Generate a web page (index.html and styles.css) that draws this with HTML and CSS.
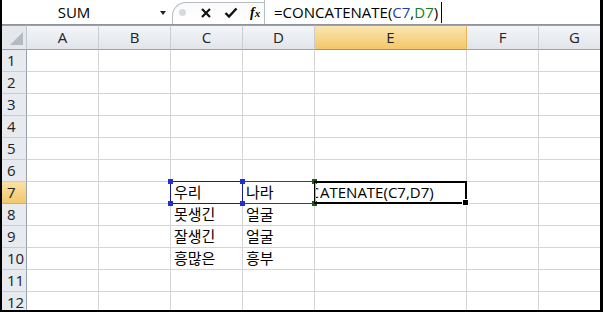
FILE: index.html
```html
<!DOCTYPE html>
<html>
<head>
<meta charset="utf-8">
<link rel="stylesheet" href="styles.css">
</head>
<body>
<div class="frame">
  <div class="fbar">
    <div class="namebox"><span class="nametext">SUM</span><span class="arrow"></span></div>
    <div class="btns">
      <span class="grip"></span>
      <svg class="ico" width="12" height="12" viewBox="0 0 12 12"><path d="M2 2 L10 10 M10 2 L2 10" stroke="#111" stroke-width="2.2" fill="none"/></svg>
      <svg class="ico" width="14" height="12" viewBox="0 0 14 12"><path d="M1.5 6 L5 9.5 L12.5 1.5" stroke="#111" stroke-width="2.4" fill="none"/></svg>
      <span class="fx">f<span class="x">x</span></span>
    </div>
    <div class="formula">=CONCATENATE(<span class="ref-c">C7</span>,<span class="ref-d">D7</span>)<span class="caret"></span></div>
  </div>
  <div class="grid">
    <div class="corner"><span class="tri"></span></div>
    <div class="ch">A</div><div class="ch">B</div><div class="ch">C</div><div class="ch">D</div><div class="ch active">E</div><div class="ch">F</div><div class="ch">G</div>

    <div class="rh">1</div><div class="c"></div><div class="c"></div><div class="c"></div><div class="c"></div><div class="c"></div><div class="c"></div><div class="c"></div>
    <div class="rh">2</div><div class="c"></div><div class="c"></div><div class="c"></div><div class="c"></div><div class="c"></div><div class="c"></div><div class="c"></div>
    <div class="rh">3</div><div class="c"></div><div class="c"></div><div class="c"></div><div class="c"></div><div class="c"></div><div class="c"></div><div class="c"></div>
    <div class="rh">4</div><div class="c"></div><div class="c"></div><div class="c"></div><div class="c"></div><div class="c"></div><div class="c"></div><div class="c"></div>
    <div class="rh">5</div><div class="c"></div><div class="c"></div><div class="c"></div><div class="c"></div><div class="c"></div><div class="c"></div><div class="c"></div>
    <div class="rh">6</div><div class="c"></div><div class="c"></div><div class="c"></div><div class="c"></div><div class="c"></div><div class="c"></div><div class="c"></div>
    <div class="rh active">7</div><div class="c"></div><div class="c"></div>
      <div class="c">우리<span class="selc"><i class="h tl"></i><i class="h tr"></i><i class="h bl"></i><i class="h br"></i></span></div>
      <div class="c">나라<span class="seld"><i class="g tr"></i><i class="g br"></i></span></div>
      <div class="c edit"><span class="edittext"><span class="sliver">C</span>ATENATE(C7,D7)</span><span class="pink"></span><span class="sele"><i class="fill"></i></span></div>
      <div class="c"></div><div class="c"></div>
    <div class="rh">8</div><div class="c"></div><div class="c"></div><div class="c">못생긴</div><div class="c">얼굴</div><div class="c"></div><div class="c"></div><div class="c"></div>
    <div class="rh">9</div><div class="c"></div><div class="c"></div><div class="c">잘생긴</div><div class="c">얼굴</div><div class="c"></div><div class="c"></div><div class="c"></div>
    <div class="rh">10</div><div class="c"></div><div class="c"></div><div class="c">흥많은</div><div class="c">흥부</div><div class="c"></div><div class="c"></div><div class="c"></div>
    <div class="rh">11</div><div class="c"></div><div class="c"></div><div class="c"></div><div class="c"></div><div class="c"></div><div class="c"></div><div class="c"></div>
    <div class="rh">12</div><div class="c"></div><div class="c"></div><div class="c"></div><div class="c"></div><div class="c"></div><div class="c"></div><div class="c"></div>
  </div>
</div>
</body>
</html>
```
FILE: styles.css
```css
html, body { margin: 0; padding: 0; background: #fff; }
.frame {
  width: 603px; height: 312px; box-sizing: border-box;
  border-left: 2px solid #000; border-right: 3px solid #000; border-bottom: 2px solid #000;
  overflow: hidden; background: #fff;
  font-family: "Open Sans", "Noto Sans CJK KR", sans-serif;
  color: #000;
}
.fbar {
  height: 25px; box-sizing: border-box; border-bottom: 1px solid #8e949c;
  display: flex; align-items: stretch; background: #fff;
}
.namebox {
  width: 170px; display: flex; align-items: center; position: relative;
}
.nametext { flex: 1; text-align: center; font-size: 15px; padding-right: 14px; }
.arrow {
  width: 0; height: 0; border-left: 3.5px solid transparent; border-right: 3.5px solid transparent;
  border-top: 4px solid #222; margin-right: 6px; margin-top: 2px;
}
.btns {
  width: 92px; margin-top: 2px; box-sizing: border-box;
  border: 1px solid #b7bcc3; border-right: none; border-bottom: none;
  border-radius: 14px 0 0 0;
  display: flex; align-items: center; padding-left: 6px; gap: 0;
  background: linear-gradient(#fafafa, #fff);
}
.grip {
  width: 7px; height: 7px; border-radius: 50%; background: #d7d9dc; margin-right: 14px; margin-top: -2px;
}
.ico { margin-right: 12px; margin-top: -1px; }
.fx { font-family: "Liberation Serif", serif; font-style: italic; font-weight: bold; font-size: 14px; margin-top: -2px; }
.fx .x { font-size: 11px; }
.formula {
  flex: 1; border-left: 1px solid #b7bcc3; font-size: 15px; padding-left: 9px;
  display: flex; align-items: center; white-space: nowrap; position: relative;
}
.ref-c { color: #1f3fb0; }
.ref-d { color: #1b7a24; }
.caret { display: inline-block; width: 1px; height: 21px; background: #000; margin-left: 3px; }

.grid {
  display: grid;
  grid-template-columns: 25px 72px 72px 72px 72px 152px 72px 72px;
  grid-template-rows: 25px;
  grid-auto-rows: 22px;
  width: 609px;
}
.corner {
  background: #e4e7ec; border-right: 1px solid #c2c7ce; border-bottom: 1px solid #9aa2ad;
  box-sizing: border-box; position: relative; border-top: 1px solid #9aa2ad;
}
.tri {
  position: absolute; right: 3px; bottom: 4px; width: 0; height: 0;
  border-left: 13px solid transparent; border-bottom: 13px solid #b5b9c0;
}
.ch {
  box-sizing: border-box; border-right: 1px solid #c9cdd3; border-bottom: 1px solid #9aa2ad;
  border-top: 1px solid #9aa2ad;
  background: linear-gradient(#f3f5f8, #e1e5ea);
  text-align: center; font-size: 15px; line-height: 23px; color: #222;
}
.ch.active {
  background: linear-gradient(#fae5b0, #f4c76a); border-right-color: #e9b658; border-bottom-color: #c2912f;
}
.rh {
  box-sizing: border-box; border-right: 1px solid #9aa2ad; border-bottom: 1px solid #c9cdd3;
  background: #e7eaee; font-size: 15px; line-height: 21px; padding-left: 5px; color: #222;
}
.rh.active { background: linear-gradient(#fae1a4, #f4c76a); border-bottom-color: #e0ad4f; }
.c {
  box-sizing: border-box; border-right: 1px solid #d4d4d4; border-bottom: 1px solid #d4d4d4;
  font-size: 15px; line-height: 21px; padding-left: 3px; position: relative; white-space: nowrap;
}
.edit { padding-left: 1px; }
.edittext { display: flex; }
.sliver {
  display: inline-block; width: 3px; overflow: hidden; direction: rtl; margin-right: 1px;
}
.selc { position: absolute; left: -1px; top: -1px; right: -1px; bottom: -1px; border: 1px solid #1a1a9a; z-index: 2; }
.seld { position: absolute; left: -1px; top: -1px; right: -1px; bottom: -1px; border: 1px solid #1d5b1d; }
.h, .g { position: absolute; width: 5px; height: 5px; }
.h { background: #1f2fd0; z-index: 3; }
.g { background: #1d5b1d; z-index: 1; }
.tl { left: -3px; top: -3px; }
.tr { right: -3px; top: -3px; }
.bl { left: -3px; bottom: -3px; }
.br { right: -3px; bottom: -3px; }
.pink { position: absolute; left: 0; top: 1px; bottom: 1px; width: 1px; background: #e58ad8; z-index: 3; }
.sele { position: absolute; left: -1px; top: -1px; right: -1px; bottom: -1px; border: 2px solid #000; z-index: 2; }
.fill { position: absolute; right: -4px; bottom: -4px; width: 5px; height: 5px; background: #000; border: 1px solid #fff; }
```
